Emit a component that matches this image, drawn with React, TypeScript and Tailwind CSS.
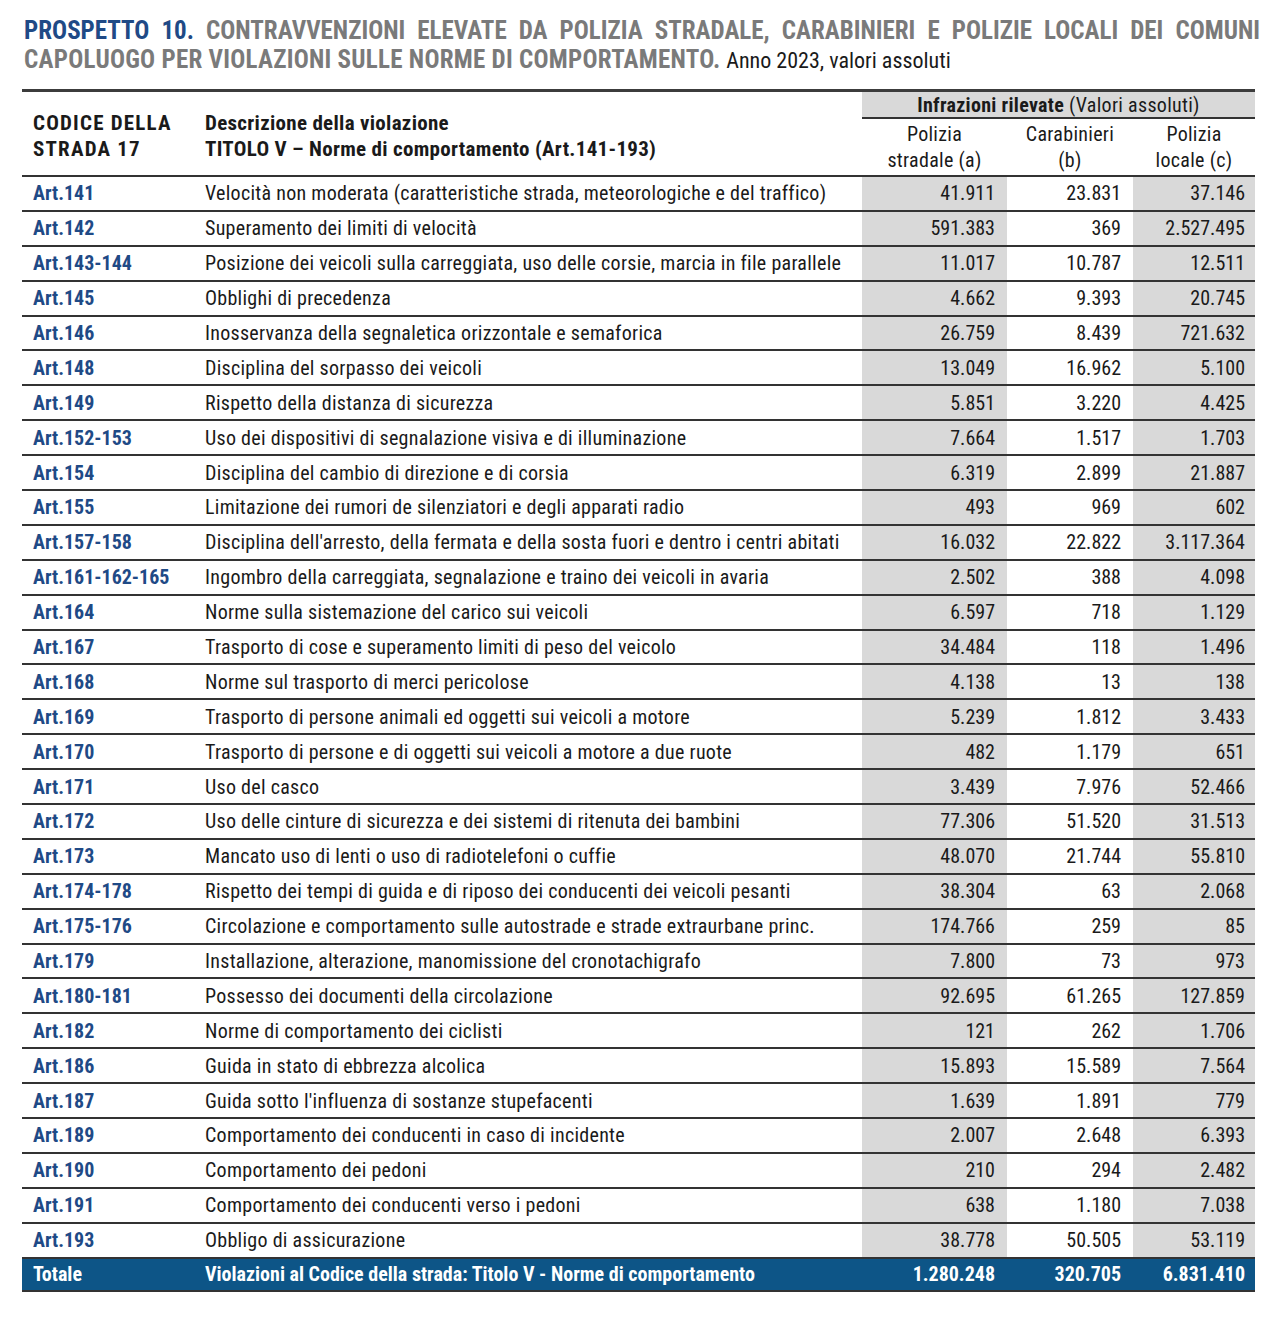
const rows: [string, string, string, string, string][] = [
  ['Art.141', 'Velocità non moderata (caratteristiche strada, meteorologiche e del traffico)', '41.911', '23.831', '37.146'],
  ['Art.142', 'Superamento dei limiti di velocità', '591.383', '369', '2.527.495'],
  ['Art.143-144', 'Posizione dei veicoli sulla carreggiata, uso delle corsie, marcia in file parallele', '11.017', '10.787', '12.511'],
  ['Art.145', 'Obblighi di precedenza', '4.662', '9.393', '20.745'],
  ['Art.146', 'Inosservanza della segnaletica orizzontale e semaforica', '26.759', '8.439', '721.632'],
  ['Art.148', 'Disciplina del sorpasso dei veicoli', '13.049', '16.962', '5.100'],
  ['Art.149', 'Rispetto della distanza di sicurezza', '5.851', '3.220', '4.425'],
  ['Art.152-153', 'Uso dei dispositivi di segnalazione visiva e di illuminazione', '7.664', '1.517', '1.703'],
  ['Art.154', 'Disciplina del cambio di direzione e di corsia', '6.319', '2.899', '21.887'],
  ['Art.155', 'Limitazione dei rumori de silenziatori e degli apparati radio', '493', '969', '602'],
  ['Art.157-158', "Disciplina dell'arresto, della fermata e della sosta fuori e dentro i centri abitati", '16.032', '22.822', '3.117.364'],
  ['Art.161-162-165', 'Ingombro della carreggiata, segnalazione e traino dei veicoli in avaria', '2.502', '388', '4.098'],
  ['Art.164', 'Norme sulla sistemazione del carico sui veicoli', '6.597', '718', '1.129'],
  ['Art.167', 'Trasporto di cose e superamento limiti di peso del veicolo', '34.484', '118', '1.496'],
  ['Art.168', 'Norme sul trasporto di merci pericolose', '4.138', '13', '138'],
  ['Art.169', 'Trasporto di persone animali ed oggetti sui veicoli a motore', '5.239', '1.812', '3.433'],
  ['Art.170', 'Trasporto di persone e di oggetti sui veicoli a motore a due ruote', '482', '1.179', '651'],
  ['Art.171', 'Uso del casco', '3.439', '7.976', '52.466'],
  ['Art.172', 'Uso delle cinture di sicurezza e dei sistemi di ritenuta dei bambini', '77.306', '51.520', '31.513'],
  ['Art.173', 'Mancato uso di lenti o uso di radiotelefoni o cuffie', '48.070', '21.744', '55.810'],
  ['Art.174-178', 'Rispetto dei tempi di guida e di riposo dei conducenti dei veicoli pesanti', '38.304', '63', '2.068'],
  ['Art.175-176', 'Circolazione e comportamento sulle autostrade e strade extraurbane princ.', '174.766', '259', '85'],
  ['Art.179', 'Installazione, alterazione, manomissione del cronotachigrafo', '7.800', '73', '973'],
  ['Art.180-181', 'Possesso dei documenti della circolazione', '92.695', '61.265', '127.859'],
  ['Art.182', 'Norme di comportamento dei ciclisti', '121', '262', '1.706'],
  ['Art.186', 'Guida in stato di ebbrezza alcolica', '15.893', '15.589', '7.564'],
  ['Art.187', "Guida sotto l'influenza di sostanze stupefacenti", '1.639', '1.891', '779'],
  ['Art.189', 'Comportamento dei conducenti in caso di incidente', '2.007', '2.648', '6.393'],
  ['Art.190', 'Comportamento dei pedoni', '210', '294', '2.482'],
  ['Art.191', 'Comportamento dei conducenti verso i pedoni', '638', '1.180', '7.038'],
  ['Art.193', 'Obbligo di assicurazione', '38.778', '50.505', '53.119'],
];

const font = {
  fontFamily: "'Liberation Sans Narrow', 'Arial Narrow', 'Roboto Condensed', 'DejaVu Sans Condensed', 'Liberation Sans', sans-serif",
};

export default function App() {
  return (
    <div className="w-[1280px] h-[1320px] bg-white text-[#1a1a1a]" style={font}>
      {/* Title */}
      <div className="pl-[24px] pr-[20px] pt-[16px] text-[25px] leading-[29px]">
        <p className="font-bold text-[#7a7a7a] text-justify [text-align-last:justify]">
          <span className="text-[#1f4a86]">PROSPETTO 10.</span> CONTRAVVENZIONI ELEVATE DA POLIZIA STRADALE, CARABINIERI E POLIZIE LOCALI DEI COMUNI
        </p>
        <p>
          <span className="font-bold text-[#7a7a7a] tracking-[0.25px]">CAPOLUOGO PER VIOLAZIONI SULLE NORME DI COMPORTAMENTO.</span>{' '}
          <span className="text-[22px] text-[#1a1a1a]">Anno 2023, valori assoluti</span>
        </p>
      </div>

      {/* Table */}
      <div className="ml-[22px] mt-[14px] w-[1233px] border-t-[3px] border-[#3c3c3c] text-[20px]">
        {/* Header */}
        <div className="flex border-b-2 border-[#333]">
          <div className="w-[178px] pl-[11px] flex items-center font-bold text-[21px] tracking-[1.2px] leading-[26px] pt-[4px]">
            CODICE DELLA<br />STRADA 17
          </div>
          <div className="w-[662px] pl-[5px] flex items-center font-bold text-[21px] tracking-[0.3px] leading-[26px] pt-[4px]">
            Descrizione della violazione<br />TITOLO V – Norme di comportamento (Art.141-193)
          </div>
          <div className="w-[393px] flex flex-col">
            <div className="h-[27px] bg-[#d9d9d9] border-b-2 border-[#333] text-center leading-[27px] tracking-[0.3px]">
              <span className="font-bold">Infrazioni rilevate</span> (Valori assoluti)
            </div>
            <div className="flex h-[56px] text-center leading-[26px] items-center tracking-[0.3px]">
              <div className="w-[145px]">Polizia<br />stradale (a)</div>
              <div className="w-[126px]">Carabinieri<br />(b)</div>
              <div className="w-[122px]">Polizia<br />locale (c)</div>
            </div>
          </div>
        </div>

        {/* Rows */}
        {rows.map((r) => (
          <div key={r[0]} className="flex h-[34.9px] border-b-2 border-[#333] leading-none">
            <div className="w-[178px] pl-[11px] flex items-center font-bold text-[#1f4a86]">{r[0]}</div>
            <div className="w-[662px] pl-[5px] flex items-center whitespace-nowrap tracking-[0.28px]">{r[1]}</div>
            <div className="w-[145px] pr-[12px] flex items-center justify-end bg-[#d9d9d9]">{r[2]}</div>
            <div className="w-[126px] pr-[12px] flex items-center justify-end">{r[3]}</div>
            <div className="w-[122px] pr-[10px] flex items-center justify-end bg-[#d9d9d9]">{r[4]}</div>
          </div>
        ))}

        {/* Total */}
        <div className="flex h-[33px] bg-[#0d5587] text-white font-bold border-b-2 border-[#333] leading-none">
          <div className="w-[178px] pl-[11px] flex items-center">Totale</div>
          <div className="w-[662px] pl-[5px] flex items-center">Violazioni al Codice della strada: Titolo V - Norme di comportamento</div>
          <div className="w-[145px] pr-[12px] flex items-center justify-end">1.280.248</div>
          <div className="w-[126px] pr-[12px] flex items-center justify-end">320.705</div>
          <div className="w-[122px] pr-[10px] flex items-center justify-end">6.831.410</div>
        </div>
      </div>
    </div>
  );
}
